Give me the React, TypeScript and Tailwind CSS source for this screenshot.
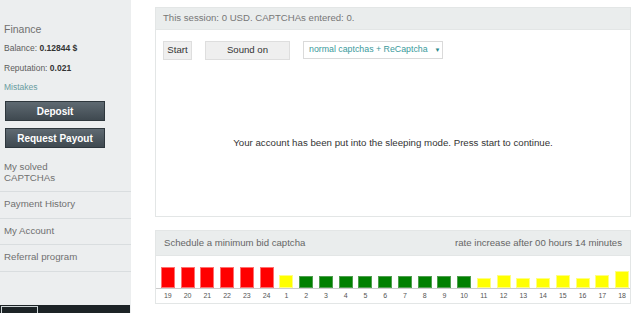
import React from "react";

type Bar = { label: number; color: "red" | "yellow" | "green"; h: number };

const bars: Bar[] = [
  { label: 19, color: "red", h: 21 },
  { label: 20, color: "red", h: 21 },
  { label: 21, color: "red", h: 21 },
  { label: 22, color: "red", h: 21 },
  { label: 23, color: "red", h: 21 },
  { label: 24, color: "red", h: 21 },
  { label: 1, color: "yellow", h: 13 },
  { label: 2, color: "green", h: 12 },
  { label: 3, color: "green", h: 12 },
  { label: 4, color: "green", h: 12 },
  { label: 5, color: "green", h: 12 },
  { label: 6, color: "green", h: 12 },
  { label: 7, color: "green", h: 12 },
  { label: 8, color: "green", h: 12 },
  { label: 9, color: "green", h: 12 },
  { label: 10, color: "green", h: 12 },
  { label: 11, color: "yellow", h: 10 },
  { label: 12, color: "yellow", h: 13 },
  { label: 13, color: "yellow", h: 10 },
  { label: 14, color: "yellow", h: 10 },
  { label: 15, color: "yellow", h: 13 },
  { label: 16, color: "yellow", h: 10 },
  { label: 17, color: "yellow", h: 13 },
  { label: 18, color: "yellow", h: 17 },
];

const barColor = {
  red: "bg-[#ff0000] border-[#ff7070]",
  yellow: "bg-[#ffff00] border-[#ffff80]",
  green: "bg-[#008000] border-[#4f9f4f]",
};

const menu = ["Payment History", "My Account", "Referral program"];

function Sidebar() {
  return (
    <aside className="w-[131px] shrink-0 bg-[#eceeef] flex flex-col text-[#5c5c5c]">
      <div className="px-[4px] pt-[23px]">
        <div className="text-[10.5px] leading-[13px] text-[#707070]">Finance</div>
        <div className="mt-[6px] text-[8.5px] leading-[13px]">
          Balance: <b className="text-[#333]">0.12844 $</b>
        </div>
        <div className="mt-[7px] text-[8.5px] leading-[13px]">
          Reputation: <b className="text-[#333]">0.021</b>
        </div>
        <div className="mt-[6px] text-[8.5px] leading-[13px] text-[#6a9c9f]">Mistakes</div>
      </div>
      <div className="px-[5px] mt-[7px] flex flex-col gap-[7px]">
        <button className="w-[100px] h-[20px] border border-[#2e373d] bg-gradient-to-b from-[#5f6a72] to-[#3f4950] text-white text-[10px] font-bold">
          Deposit
        </button>
        <button className="w-[100px] h-[20px] border border-[#2e373d] bg-gradient-to-b from-[#5f6a72] to-[#3f4950] text-white text-[10px] font-bold">
          Request Payout
        </button>
      </div>
      <div className="mt-[13px] px-[4px] pb-[8px] text-[9.7px] leading-[11px] text-[#707070] border-b border-[#d9dddf]">
        My solved
        <br />
        CAPTCHAs
      </div>
      {menu.map((m) => (
        <div
          key={m}
          className="px-[4px] h-[26.5px] flex items-center text-[9.7px] text-[#707070] border-b border-[#d9dddf]"
        >
          {m}
        </div>
      ))}
      <div className="flex-1" />
      <div className="h-[8px] bg-[#1c2326] mr-[1px] flex items-end pl-[1px]">
        <div className="w-[37px] h-[7px] border-t border-x border-[#cfd6d8]" />
      </div>
    </aside>
  );
}

export default function App() {
  return (
    <div
      className="w-[640px] h-[313px] flex bg-white overflow-hidden"
      style={{ fontFamily: '"Liberation Sans", Arial, sans-serif' }}
    >
      <Sidebar />
      <main className="flex-1 min-w-0 pl-[24px] pr-[9px] pt-[7px] flex flex-col">
        <section className="h-[210px] border border-[#e3e6e6] flex flex-col">
          <div className="h-[22px] bg-[#eaeded] border-b border-[#e3e6e6] flex items-center pl-[7px] text-[9.6px] text-[#777]">
            This session: 0 USD. CAPTCHAs entered: 0.
          </div>
          <div className="flex items-start pl-[7px] pt-[11px]">
            <button className="w-[29px] h-[19px] bg-[#efefef] border border-[#dedede] text-[9.6px] text-[#333]">
              Start
            </button>
            <button className="ml-[13px] w-[85px] h-[19px] bg-[#efefef] border border-[#dedede] text-[9.6px] text-[#333]">
              Sound on
            </button>
            <div className="ml-[13px] w-[140px] h-[18px] border border-[#dadada] flex items-center pl-[5px] gap-[7px] whitespace-nowrap text-[8.8px] text-[#3a9a9c]">
              normal captchas + ReCaptcha
              <span className="text-[6px] text-[#2a8a8c]">▼</span>
            </div>
          </div>
          <div className="flex-1 flex items-start justify-center pt-[76px] text-[9.7px] text-[#333]">
            Your account has been put into the sleeping mode. Press start to continue.
          </div>
        </section>

        <section className="mt-[13px] h-[74px] border border-[#e3e6e6] flex flex-col overflow-hidden">
          <div className="h-[25px] bg-[#eaeded] border-b border-[#e3e6e6] flex items-center justify-between pl-[8px] pr-[8px] text-[9.6px] text-[#666]">
            <span>Schedule a minimum bid captcha</span>
            <span>rate increase after 00 hours 14 minutes</span>
          </div>
          <div className="h-[33px] shrink-0 flex items-end border-b border-[#cccccc]">
            <div className="ml-[2px] w-[474px] shrink-0 grid grid-cols-24 items-end">
              {bars.map((b) => (
                <div key={b.label} className="flex justify-center">
                  <div
                    className={`w-[14px] border ${barColor[b.color]}`}
                    style={{ height: b.h }}
                  />
                </div>
              ))}
            </div>
          </div>
          <div className="h-[14px] shrink-0 ml-[2px] w-[474px] grid grid-cols-24 items-center">
            {bars.map((b) => (
              <div key={b.label} className="text-center text-[7px] text-[#555]">
                {b.label}
              </div>
            ))}
          </div>
        </section>
      </main>
    </div>
  );
}
